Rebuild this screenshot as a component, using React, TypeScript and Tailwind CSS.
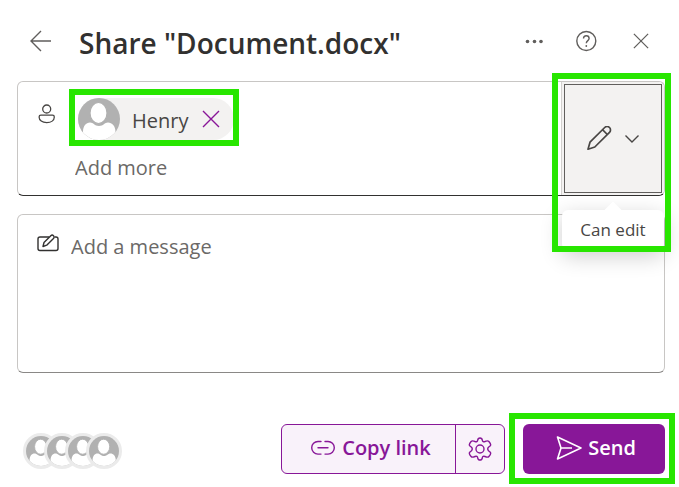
import { useState } from "react";

function Avatar({ className }: { className: string }) {
  return (
    <svg viewBox="0 0 42 42" className={className} aria-hidden="true">
      <defs>
        <clipPath id="avatar-clip">
          <circle cx="21" cy="21" r="21" />
        </clipPath>
      </defs>
      <g clipPath="url(#avatar-clip)">
        <rect width="42" height="42" fill="#b1b1b1" />
        <path
          d="M5 42V34C5 28 8 24.500 12 24.500C15.500 24.500 16.500 28 21 28C25.500 28 26.500 24.500 30 24.500C34 24.500 37.500 28 37.500 34V42Z"
          fill="#fff"
        />
        <ellipse cx="20.500" cy="15" rx="8.500" ry="10.500" fill="#fff" stroke="#b1b1b1" strokeWidth="1.200" />
      </g>
    </svg>
  );
}

function CloseIcon({ className }: { className: string }) {
  return (
    <svg viewBox="0 0 18 18" className={className} fill="none" stroke="currentColor" strokeWidth="1.400" aria-hidden="true">
      <path d="M1 1L17 17M17 1L1 17" />
    </svg>
  );
}

// Marks the part of the dialog that the reader has to click
function Highlight({ className }: { className: string }) {
  return <div className={`pointer-events-none absolute z-20 border-6 border-[#28e600] ${className}`} />;
}

function Header() {
  return (
    <header className="flex h-[81px] items-center pl-[13px] pr-4 text-[#605e5c]">
      <button type="button" aria-label="Back" className="shrink-0">
        <svg width="22" height="22" viewBox="0 0 22 22" fill="none" stroke="currentColor" strokeWidth="1.400">
          <path d="M21 11H1M11 1L1 11L11 21" />
        </svg>
      </button>
      <h1 className="ml-[27px] flex-1 whitespace-nowrap pt-1 text-[28px] font-semibold leading-9 text-[#323130]">
        Share "Document.docx"
      </h1>
      <div className="flex shrink-0 items-center">
        <button type="button" aria-label="More options">
          <svg width="18" height="18" viewBox="0 0 18 18" fill="currentColor">
            <circle cx="2.500" cy="9.500" r="1.800" />
            <circle cx="9.500" cy="9.500" r="1.800" />
            <circle cx="16" cy="9.500" r="1.800" />
          </svg>
        </button>
        <button type="button" aria-label="Help" className="ml-8">
          <svg width="22" height="22" viewBox="0 0 22 22" fill="none" stroke="currentColor" strokeWidth="1.400">
            <circle cx="11.300" cy="11" r="9.500" />
            <path d="M8.500 8.500C8.500 6.800 9.700 5.700 11.300 5.700S14.100 6.800 14.100 8.400C14.100 10.600 11.300 10.700 11.300 13.300" />
            <circle cx="11.300" cy="16" r="0.900" fill="currentColor" stroke="none" />
          </svg>
        </button>
        <button type="button" aria-label="Close" className="ml-9">
          <CloseIcon className="size-4" />
        </button>
      </div>
    </header>
  );
}

function Recipients() {
  const [people, setPeople] = useState(["Henry"]);

  return (
    <section className="relative flex h-[115px] rounded-md border border-[#c8c6c4] border-b-[#323130]">
      <svg width="18" height="20" viewBox="0 0 18 20" fill="none" stroke="#484644" strokeWidth="1.300" className="ml-5 mt-[22px] shrink-0" aria-hidden="true">
        <circle cx="8.700" cy="5" r="4" />
        <path d="M2.900 11.200H14.500C15.700 11.200 16.300 12 16.300 13C16.300 16.400 13.200 18.600 8.700 18.600S1.100 16.400 1.100 13C1.100 12 1.700 11.200 2.900 11.200Z" />
      </svg>

      <div className="ml-[19px] flex min-w-0 flex-1 flex-col items-start pt-4">
        <div className="relative ml-[3px] h-[42px]">
          {people.map((name) => (
            <div key={name} className="flex h-[42px] items-center rounded-full bg-[#f3f2f1] pr-3.5">
              <Avatar className="size-[42px]" />
              <span className="ml-3 w-[58px] pt-1 text-xl text-[#484644]">{name}</span>
              <button
                type="button"
                aria-label={`Remove ${name}`}
                className="ml-3 text-[#881798]"
                onClick={() => setPeople(people.filter((p) => p !== name))}
              >
                <CloseIcon className="size-[18px]" />
              </button>
            </div>
          ))}
          <Highlight className="-left-[9px] -right-[5px] -top-[9px] h-[57px]" />
        </div>
        <input
          type="text"
          aria-label="Add more people"
          placeholder="Add more"
          className="mt-[11px] h-8 w-full text-xl outline-none placeholder:text-[#6b6967]"
        />
      </div>

      <div className="relative w-[103px] shrink-0 rounded-r-md border-l border-[#d2d0ce] bg-[#f3f2f1] py-0.5 pl-0.5 pr-0.5">
        <button
          type="button"
          aria-label="Can edit"
          className="flex h-full w-full items-center justify-center gap-3 border border-[#605e5c] bg-[#f3f2f1] text-[#484644]"
        >
          <svg width="26" height="26" viewBox="0 0 26 26" fill="none" stroke="currentColor" strokeWidth="1.700" strokeLinejoin="round">
            <path d="M3 16.200L17.700 1.500A3.200 3.200 0 0 1 22.500 6.300L7.800 21L1 23.200Z" />
            <path d="M15.500 3.700L20.300 8.500" />
          </svg>
          <svg width="14" height="8" viewBox="0 0 14 8" fill="none" stroke="currentColor" strokeWidth="1.400">
            <path d="M0.500 0.500L7 7L13.500 0.500" />
          </svg>
        </button>
        <div role="tooltip" className="absolute inset-x-0 top-32 z-10 rounded-md bg-white pt-1.5 pb-1.5 text-center text-[17px] leading-7 text-[#484644] shadow-[0_6px_22px_rgba(0,0,0,0.2)]">
          <div className="absolute -top-1.5 left-1/2 size-3 -translate-x-1/2 rotate-45 bg-white" />
          Can edit
        </div>
        <Highlight className="-left-2.5 -right-[7px] -top-[9px] h-[179px]" />
      </div>
    </section>
  );
}

function Message() {
  return (
    <section className="mt-[18px] flex h-[159px] rounded-md border border-[#c8c6c4] border-b-[#8a8886]">
      <svg width="24" height="20" viewBox="0 0 24 20" fill="none" stroke="#323130" strokeWidth="1.400" strokeLinejoin="round" className="ml-[18px] mt-[19px] shrink-0" aria-hidden="true">
        <path d="M13 3H4A2 2 0 0 0 2 5V14.500A2 2 0 0 0 4 16.500H20A2 2 0 0 0 22 14.500V5A2 2 0 0 0 20 3H19" />
        <path d="M8 8.500L14.800 1.700A1.800 1.800 0 0 1 17.500 4.400L10.700 11.200L7 12.500Z" />
      </svg>
      <textarea
        aria-label="Message"
        placeholder="Add a message"
        className="ml-[11px] mt-[18px] flex-1 resize-none text-xl outline-none placeholder:text-[#6b6967]"
      />
    </section>
  );
}

function Footer() {
  return (
    <footer className="mt-[51px] flex h-[50px] items-center">
      <div className="ml-1.5 flex flex-1 -space-x-[15px] pt-1">
        {[1, 2, 3, 4].map((id) => (
          <span key={id} className="size-9 shrink-0 rounded-full border-3 border-[#ebebeb] bg-[#ebebeb]">
            <Avatar className="size-[30px]" />
          </span>
        ))}
      </div>

      <div className="flex h-full w-56 shrink-0 rounded-md border border-[#881798] bg-[#f9f2fa] text-[#881798]">
        <button type="button" className="flex flex-1 items-center justify-center gap-1.5 pb-0.5 pl-1 text-xl font-semibold whitespace-nowrap">
          <svg width="26" height="16" viewBox="0 0 26 16" fill="none" stroke="currentColor" strokeWidth="1.400" strokeLinecap="round">
            <path d="M11 1.500H8A6.300 6.300 0 0 0 8 14.100H11M15 1.500H18A6.300 6.300 0 0 1 18 14.100H15M8 7.800H18" />
          </svg>
          Copy link
        </button>
        <button type="button" aria-label="Link settings" className="flex w-[49px] items-center justify-center border-l border-[#881798]">
          <svg width="24" height="24" viewBox="0 0 24 24" fill="none" stroke="currentColor" strokeWidth="1.400" strokeLinejoin="round">
            <path d="M9.700 3.200Q10 1 12 1T14.300 3.200Q14.600 5.300 17 4.500Q19.800 3.200 20.900 4.500Q23.500 7.500 22.300 8.800L20.500 10.300Q19 12 20.500 13.700L22.300 15.200Q23.500 16.500 20.900 19.500Q19.800 20.800 17 19.500Q14.600 18.700 14.300 20.800Q14 23 12 23T9.700 20.800Q9.400 18.700 7 19.500Q4.200 20.800 3.100 19.500Q0.500 16.500 1.700 15.200L3.500 13.700Q5 12 3.500 10.300L1.700 8.800Q0.500 7.500 3.100 4.500Q4.200 3.200 7 4.500Q9.400 5.300 9.700 3.200Z" />
            <circle cx="12" cy="12" r="4" />
          </svg>
        </button>
      </div>

      <div className="relative ml-[18px] h-full w-[142px] shrink-0">
        <button type="button" className="flex h-full w-full items-center justify-center gap-1.5 rounded-md bg-[#881798] pb-0.5 pl-1 text-xl font-semibold text-white">
          <svg width="26" height="24" viewBox="0 0 26 24" fill="none" stroke="currentColor" strokeWidth="1.600" strokeLinejoin="round">
            <path d="M1.500 1L25 12L1.500 23L5 12ZM5 12H16" />
          </svg>
          Send
        </button>
        <Highlight className="-left-3.5 -right-2.5 -top-[11px] h-[71px]" />
      </div>
    </footer>
  );
}

export default function App() {
  return (
    <main className="bg-white pb-3 pl-[17px] pr-3.5 font-['Open_Sans',sans-serif]">
      <Header />
      <Recipients />
      <Message />
      <Footer />
    </main>
  );
}
